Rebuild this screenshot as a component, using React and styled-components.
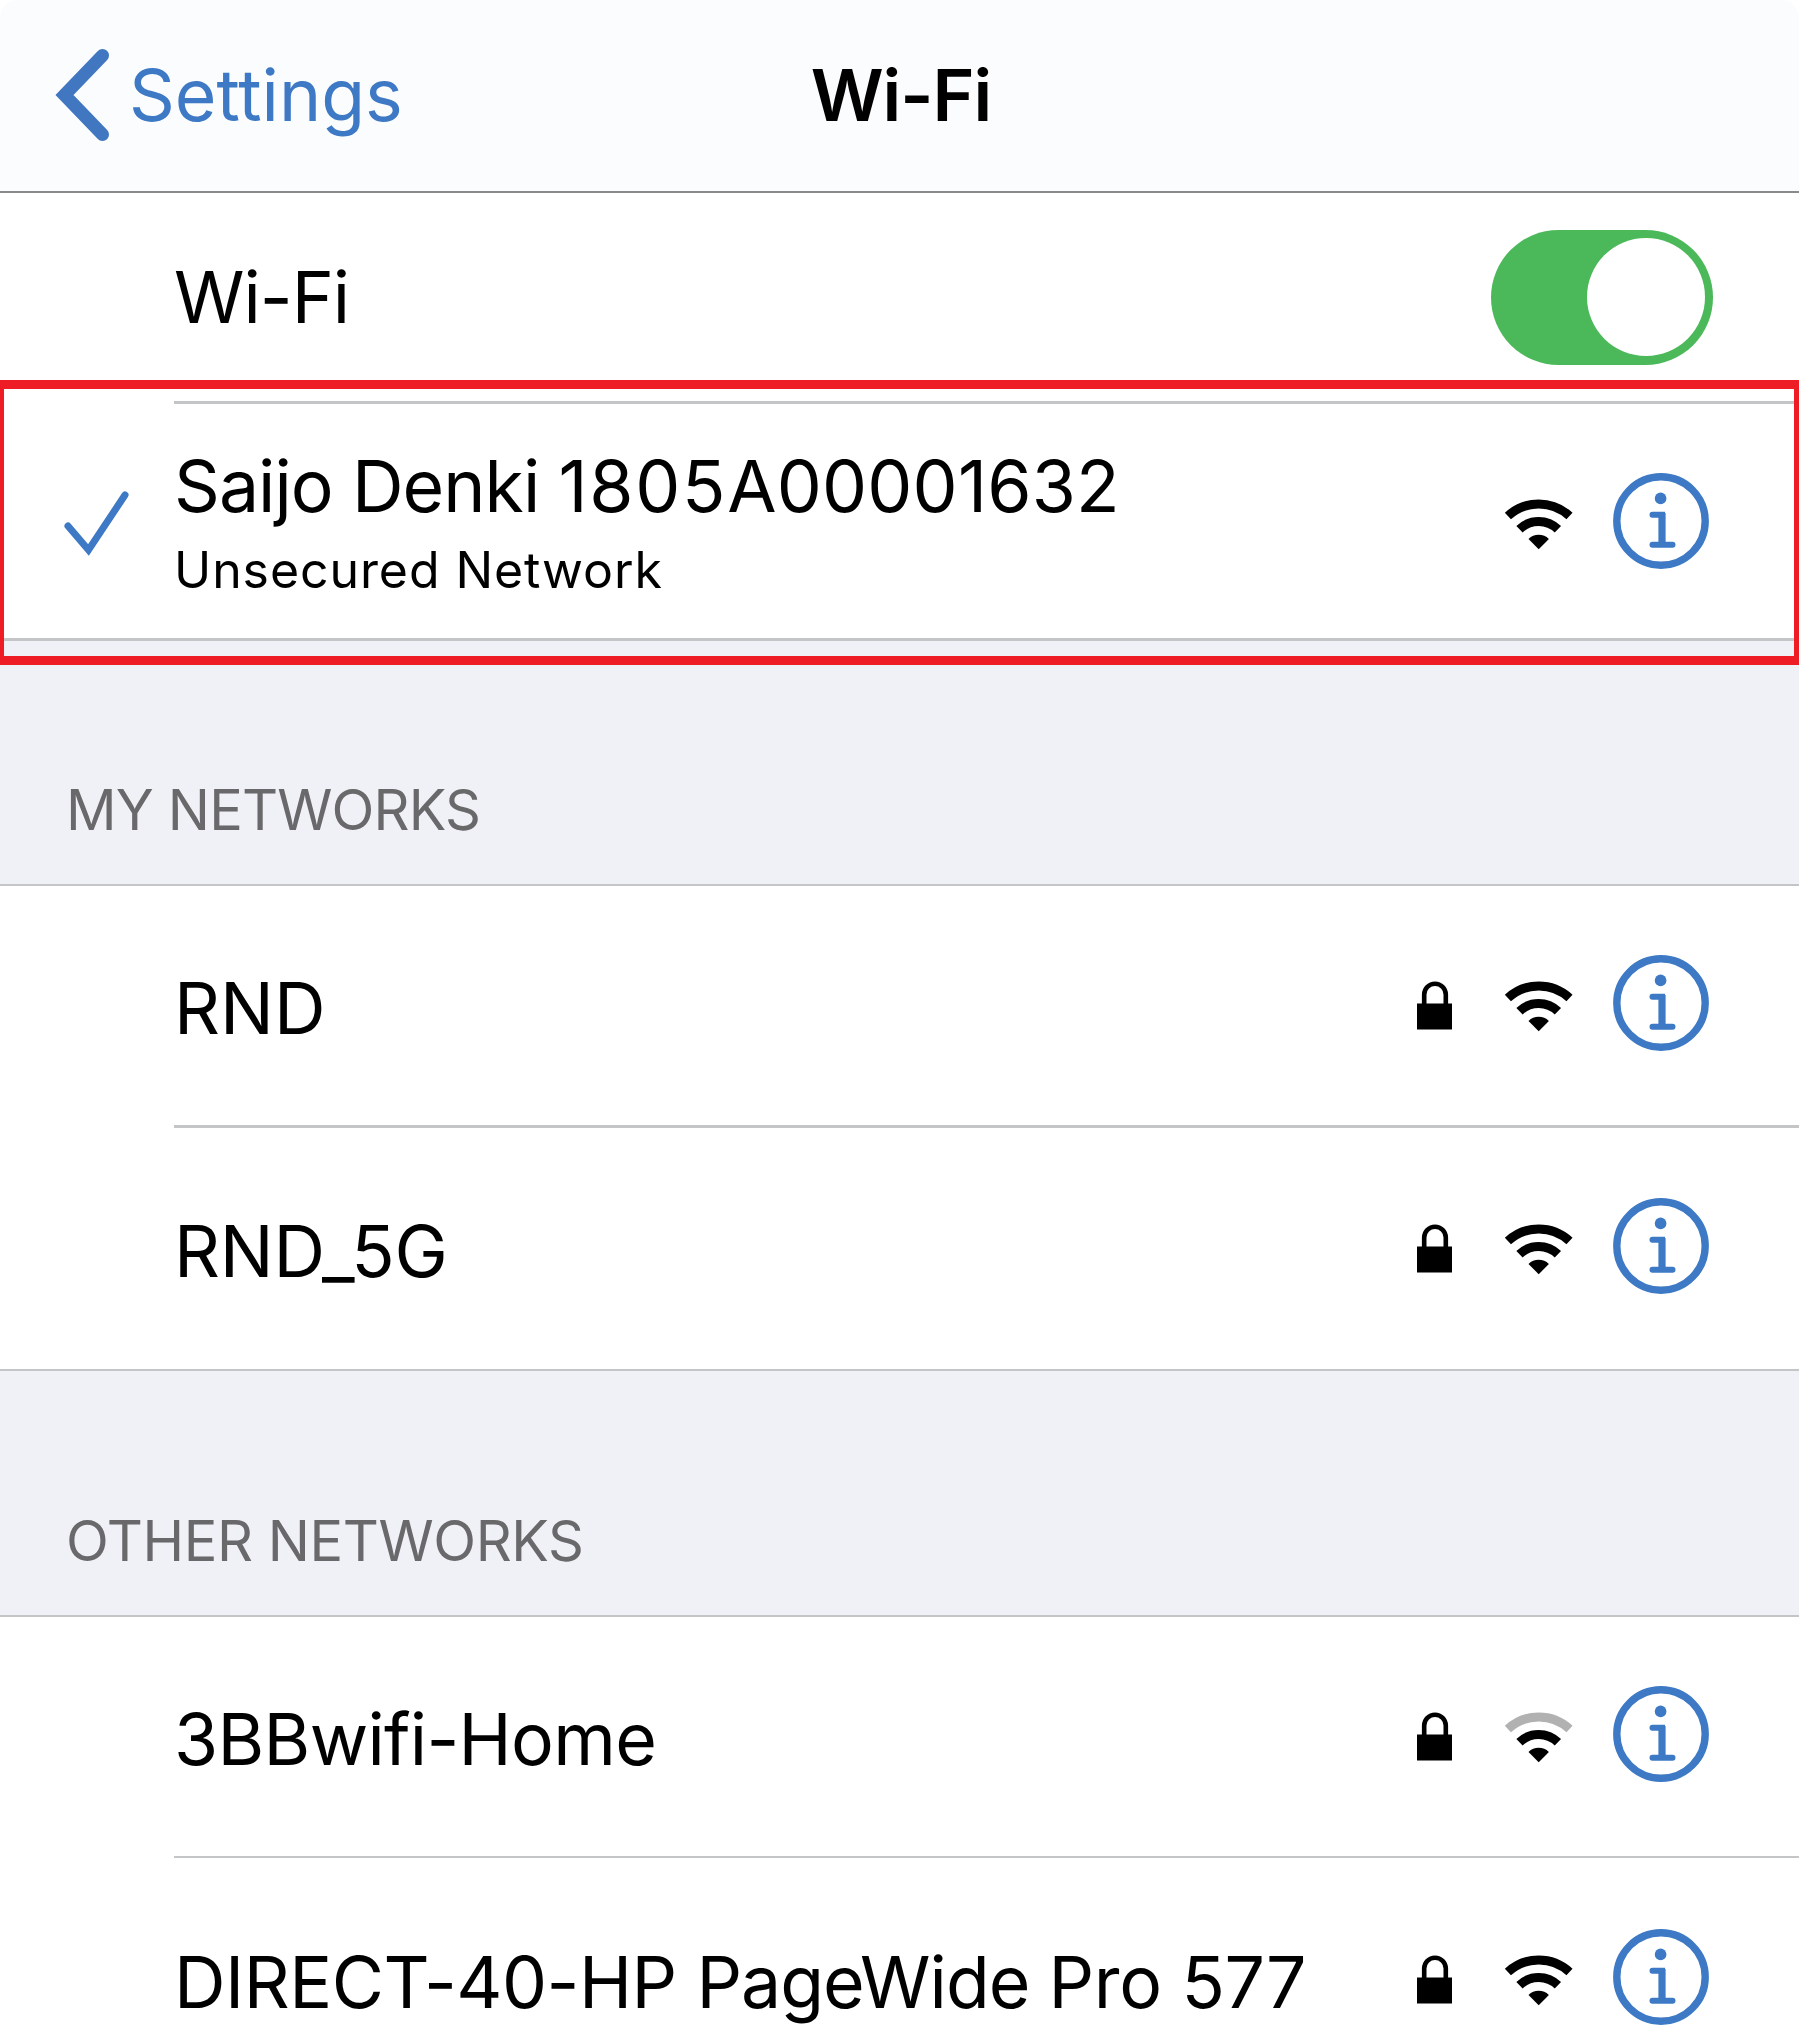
import React from "react";
import styled, { createGlobalStyle } from "styled-components";

const BLUE = "#3d79c4";
const LINE = "#c4c5c7";

const GlobalStyle = createGlobalStyle`
  body { margin: 0; background: #fff; }
  * { box-sizing: border-box; }
`;

const Screen = styled.main`
  position: relative;
  width: 1799px;
  height: 2042px;
  overflow: hidden;
  background: #fff;
  color: #000;
  font-family: Inter, "Liberation Sans", sans-serif;
  display: flex;
  flex-direction: column;
  svg { display: block; flex: none; }
`;

const NavBar = styled.header`
  flex: none;
  height: 193px;
  padding: 0 0 1px 3px;
  display: grid;
  grid-template-columns: 1fr auto 1fr;
  align-items: center;
  background: #fbfcfe;
  border-bottom: 2px solid #8a8a8c;
  border-radius: 18px 18px 0 0;
`;

const BackLink = styled.a`
  display: flex;
  align-items: center;
  padding-left: 51px;
  gap: 19px;
  color: ${BLUE};
`;

const Label = styled.span`
  font-size: ${(p) => p.$size || 71.5}px;
  font-weight: ${(p) => p.$weight || 400};
  line-height: 84px;
  letter-spacing: ${(p) => p.$track || 0}px;
  white-space: pre;
`;

const Run = styled.span`
  letter-spacing: ${(p) => p.$track}px;
`;

const Row = styled.div`
  flex: none;
  display: flex;
  height: ${(p) => p.$height}px;
`;

const Leading = styled.div`
  flex: none;
  width: 174px;
  display: flex;
  align-items: center;
  padding: 3px 0 0 62px;
`;

const RowBody = styled.div`
  flex: 1;
  display: flex;
  align-items: center;
  justify-content: space-between;
  padding-right: 90px;
  border-bottom: ${(p) => p.$divider || 0}px solid ${LINE};
`;

const Texts = styled.div`
  display: flex;
  flex-direction: column;
  padding-top: ${(p) => p.$top}px;
`;

const Trailing = styled.div`
  display: flex;
  align-items: center;
  padding-bottom: ${(p) => p.$bottom}px;
`;

const LockSlot = styled.div`
  margin-right: 52px;
`;

const WifiSlot = styled.div`
  margin-right: 39px;
`;

const Toggle = styled.div`
  width: 222px;
  height: 135px;
  margin-right: -4px;
  padding: 8.5px;
  border-radius: 68px;
  display: flex;
  justify-content: flex-end;
  background: #4bb95a;
`;

const Knob = styled.div`
  width: 118px;
  height: 118px;
  border-radius: 50%;
  background: #fff;
`;

const SectionHeader = styled.h2`
  flex: none;
  margin: 0;
  height: ${(p) => p.$height}px;
  padding: 0 0 32.5px 66px;
  display: flex;
  align-items: flex-end;
  background: #f0f1f6;
  color: #69696b;
  border: 0 solid ${LINE};
  border-top-width: ${(p) => p.$top}px;
  border-bottom-width: 2px;
`;

const Highlight = styled.div`
  position: absolute;
  left: 0;
  right: 0;
  top: 380px;
  height: 285px;
  border: solid #ee1c24;
  border-width: 9px 5px 9px 4px;
`;

const Chevron = () => (
  <svg width="56" height="94" viewBox="0 0 56 94" fill="none">
    <path d="M48.5 7.5 10.5 47l38 39.5" stroke="#4177c0" strokeWidth="13" strokeLinecap="round" strokeMiterlimit="10" />
  </svg>
);

const Check = () => (
  <svg width="70" height="68" viewBox="0 0 70 68" fill="none">
    <path d="M6 37 26.500 61 63 6" stroke={BLUE} strokeWidth="7" strokeLinecap="round" strokeLinejoin="miter" />
  </svg>
);

const Lock = () => (
  <svg width="35" height="96" viewBox="0 0 35 96" fill="none">
    <path d="M7.200 50V39.500a10.800 10.800 0 0 1 21.600 0V50" stroke="#000" strokeWidth="4.600" />
    <path d="M0 48.500h35v26H0z" fill="#000" />
  </svg>
);

const Wifi = ({ weak }) => (
  <svg width="70" height="96" viewBox="0 0 70 96" fill="none">
    <path d="M3.900 43A45.500 45.500 0 0 1 65.500 43" stroke={weak ? "#b1b1b1" : "#000"} strokeWidth="9" />
    <path d="M15.500 56.200A27.500 27.500 0 0 1 53.900 56.200" stroke="#000" strokeWidth="9" />
    <path d="M24.500 66A14.500 14.500 0 0 1 44.900 66L34.700 76.200Z" fill="#000" />
  </svg>
);

const Info = () => (
  <svg width="96" height="96" viewBox="0 0 96 96" fill="none">
    <circle cx="48" cy="48" r="44.200" stroke={BLUE} strokeWidth="7.400" />
    <circle cx="47.600" cy="25.400" r="5.800" fill={BLUE} />
    <path d="M39.500 41.800H49V71.800M39.500 71.800H59.500" stroke={BLUE} strokeWidth="6" strokeLinecap="round" />
    <path d="M49 40V71" stroke={BLUE} strokeWidth="7.200" />
  </svg>
);

function Network({ name, note, joined, locked, weak, height, divider, top = 5, bottom = 5 }) {
  return (
    <Row $height={height}>
      <Leading>{joined && <Check />}</Leading>
      <RowBody $divider={divider}>
        <Texts $top={top}>
          <Label>
            {name.map(([text, track]) => (
              <Run key={text} $track={track}>{text}</Run>
            ))}
          </Label>
          {note && <Label $size={50} $track={0.92}>{note}</Label>}
        </Texts>
        <Trailing $bottom={bottom}>
          {locked && <LockSlot><Lock /></LockSlot>}
          <WifiSlot><Wifi weak={weak} /></WifiSlot>
          <Info />
        </Trailing>
      </RowBody>
    </Row>
  );
}

export default function App() {
  return (
    <Screen>
      <GlobalStyle />
      <NavBar>
        <BackLink>
          <Chevron />
          <Label>Settings</Label>
        </BackLink>
        <Label $weight={600} $track={-1}>Wi-Fi</Label>
      </NavBar>

      <Row $height={211}>
        <Leading />
        <RowBody $divider={3}>
          <Label $track={-1}>Wi-Fi</Label>
          <Toggle><Knob /></Toggle>
        </RowBody>
      </Row>
      <Network
        name={[["Saijo Denki ", -0.95], ["1805", 1.7], ["A00001632", 0.2]]}
        note="Unsecured Network"
        joined
        height={234}
        top={14}
        bottom={0}
      />

      <SectionHeader $height={248} $top={3}>
        <Label $size={56} $track={-0.85}>MY NETWORKS</Label>
      </SectionHeader>
      <Network name={[["RND", 0]]} locked height={242} divider={3} />
      <Network name={[["RND_5G", -0.2]]} locked height={241} />

      <SectionHeader $height={248} $top={2}>
        <Label $size={56} $track={-0.42}>OTHER NETWORKS</Label>
      </SectionHeader>
      <Network name={[["3BBwifi-Home", -0.7]]} locked weak height={241} divider={2} bottom={6} />
      <Network
        name={[["DIRECT-40-HP ", -0.5], ["PageWide ", -1], ["Pro 577", -0.35]]}
        locked
        height={242}
        bottom={4}
      />

      <Highlight />
    </Screen>
  );
}
